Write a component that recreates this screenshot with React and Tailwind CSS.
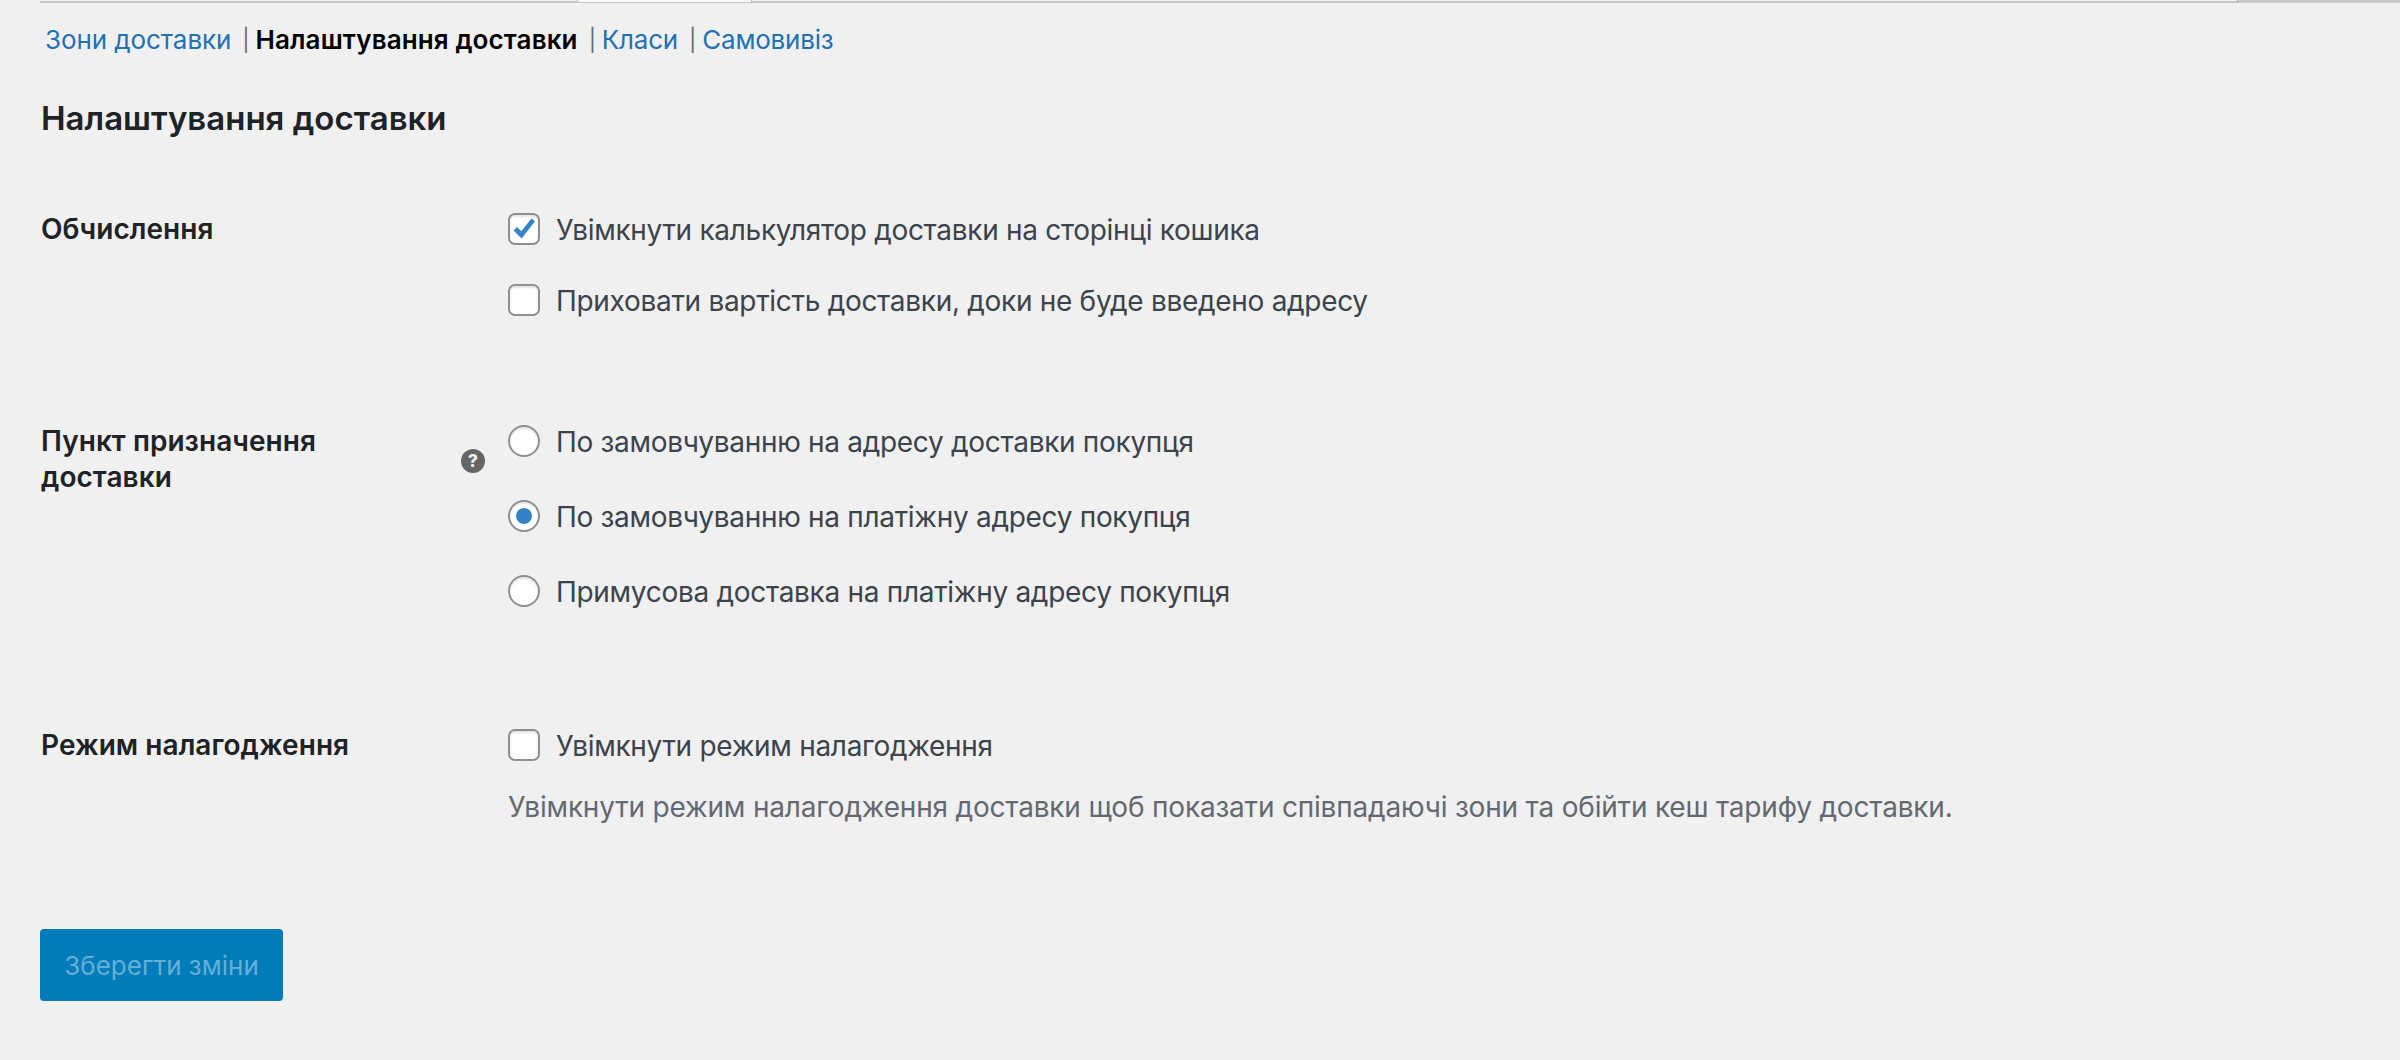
const font = "font-['Inter','Liberation_Sans',sans-serif]";

function Checkbox({ checked }) {
  return (
    <span className="w-[32px] h-[32px] shrink-0 rounded-[7px] border-[2px] border-[#8c8f94] bg-white shadow-[inset_0_2px_2px_rgba(0,0,0,0.1)] flex items-center justify-center">
      {checked && (
        <svg width="24" height="24" viewBox="0 0 24 24">
          <path d="M1.5 13.5 L5 10 L9.2 14.2 L19.5 1.5 L23 4.2 L9.6 21.5 Z" fill="#3582c4" />
        </svg>
      )}
    </span>
  );
}

function Radio({ checked }) {
  return (
    <span className="w-[32px] h-[32px] shrink-0 rounded-full border-[2px] border-[#8c8f94] bg-white shadow-[inset_0_2px_2px_rgba(0,0,0,0.1)] flex items-center justify-center">
      {checked && <span className="w-[16px] h-[16px] rounded-full bg-[#3582c4]" />}
    </span>
  );
}

function Option({ children, control }) {
  return (
    <label className="flex items-center gap-[16px] h-[32px] text-[28px] tracking-[-0.3px] text-[#3c434a]">
      {control}
      <span className="pt-[1px]">{children}</span>
    </label>
  );
}

function Sep() {
  return <span className="ml-[11px] mr-[6px] text-[22px] text-[#646970]">|</span>;
}

export default function App() {
  return (
    <div className={`${font} min-h-screen bg-[#f0f0f1] overflow-hidden`}>
      <div className="flex ml-[40px] h-[3px]">
        <div className="w-[537px] mt-[1px] bg-[#c3c4c7]" />
        <div className="w-[175px] bg-[#f6f7f7] border-x border-b border-[#c3c4c7]" />
        <div className="w-[1485px] mt-[1px] bg-[#c3c4c7]" />
        <div className="flex-1 bg-[#c8c8ca] border-l border-[#b5b5b8]" />
      </div>

      <nav className="flex items-center h-[40px] mt-[17px] ml-[45px] text-[26px] tracking-[-0.2px] leading-[40px]">
        <a className="tracking-[-0.08px] text-[#2271b1]">Зони доставки</a>
        <Sep />
        <span className="font-semibold tracking-[0.13px] text-black">Налаштування доставки</span>
        <Sep />
        <a className="text-[#2271b1]">Класи</a>
        <Sep />
        <a className="text-[#2271b1]">Самовивіз</a>
      </nav>

      <h2 className="mt-[38px] ml-[41px] text-[33px] leading-[40px] font-semibold text-[#1d2327]">
        Налаштування доставки
      </h2>

      <div className="mt-[75px] ml-[41px]">
        <div className="flex">
          <div className="w-[467px] text-[28px] tracking-[0.05px] leading-[32px] font-semibold text-[#1d2327]">Обчислення</div>
          <div className="flex flex-col gap-[39px]">
            <Option control={<Checkbox checked />}>Увімкнути калькулятор доставки на сторінці кошика</Option>
            <Option control={<Checkbox />}>Приховати вартість доставки, доки не буде введено адресу</Option>
          </div>
        </div>

        <div className="flex mt-[109px]">
          <div className="w-[467px] flex text-[28px] tracking-[0.05px] leading-[36px] font-semibold text-[#1d2327]">
            <span className="w-[420px] -mt-[2px]">Пункт призначення<br />доставки</span>
            <svg className="mt-[24px]" width="24" height="24" viewBox="0 0 24 24">
              <circle cx="12" cy="12" r="12" fill="#666666" />
              <text x="12" y="18" textAnchor="middle" fontSize="17" fontWeight="800" fill="#f0f0f1">?</text>
            </svg>
          </div>
          <div className="flex flex-col gap-[43px]">
            <Option control={<Radio />}>По замовчуванню на адресу доставки покупця</Option>
            <Option control={<Radio checked />}>По замовчуванню на платіжну адресу покупця</Option>
            <Option control={<Radio />}>Примусова доставка на платіжну адресу покупця</Option>
          </div>
        </div>

        <div className="flex mt-[122px]">
          <div className="w-[467px] text-[28px] tracking-[0.05px] leading-[32px] font-semibold text-[#1d2327]">Режим налагодження</div>
          <div className="flex flex-col">
            <Option control={<Checkbox />}>Увімкнути режим налагодження</Option>
            <p className="mt-[28px] text-[28px] tracking-[-0.19px] leading-[36px] text-[#646970]">
              Увімкнути режим налагодження доставки щоб показати співпадаючі зони та обійти кеш тарифу доставки.
            </p>
          </div>
        </div>
      </div>

      <button className="block mt-[104px] ml-[40px] w-[243px] h-[72px] rounded-[4px] bg-[#007cba] text-[26px] text-[#66afd6]">
        Зберегти зміни
      </button>
    </div>
  );
}
